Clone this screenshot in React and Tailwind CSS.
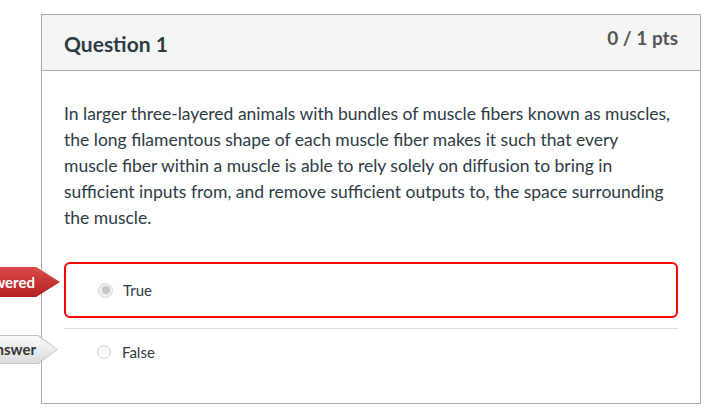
import React from 'react';

const font = { fontFamily: 'Lato, "Open Sans", sans-serif' };

const Tag = ({ children, variant }) => {
  if (variant === 'red') {
    return (
      <div className="absolute right-full mr-[4px] top-[5px] h-[30px] w-[140px] [clip-path:polygon(0_0,83%_0,100%_50%,83%_100%,0_100%)] bg-gradient-to-b from-[#dc4a4a] to-[#b11f1f] flex items-center justify-end pr-[25px]">
        <span className="text-white font-bold text-[15px] whitespace-nowrap">{children}</span>
      </div>
    );
  }
  return (
    <div className="absolute right-full mr-[6px] top-[6px] h-[29px] w-[140px] [clip-path:polygon(0_0,86%_0,100%_50%,86%_100%,0_100%)] bg-[#c4c4c4]">
      <div className="absolute inset-[1px] [clip-path:polygon(0_0,86%_0,100%_50%,86%_100%,0_100%)] bg-gradient-to-b from-[#fafafa] to-[#dcdcdc] flex items-center justify-end pr-[21px]">
        <span className="text-[#333] font-bold text-[15px] whitespace-nowrap">{children}</span>
      </div>
    </div>
  );
};

export default function App() {
  return (
    <div className="min-h-[414px] bg-white pt-[14px]" style={font}>
      <div className="ml-[41px] w-[660px] border border-[#a9a9a9]">
        <div className="h-[56px] bg-[#f5f5f5] border-b border-[#a9a9a9] flex justify-between items-start px-[22px]">
          <h2 className="pt-[16px] text-[21px] leading-[26px] font-bold text-[#2d3b45]">Question 1</h2>
          <div className="pt-[11px] text-[19px] leading-[24px] font-bold text-[#555]">0 / 1 pts</div>
        </div>
        <div className="px-[22px] pt-[30px] pb-[28px]">
          <p className="w-[608px] text-[17.5px] leading-[26px] text-[#2d3b45]">
            In larger three-layered animals with bundles of muscle fibers known as muscles, the long filamentous shape of each muscle fiber makes it such that every muscle fiber within a muscle is able to rely solely on diffusion to bring in sufficient inputs from, and remove sufficient outputs to, the space surrounding the muscle.
          </p>
          <div className="mt-[31px]">
            <div className="relative">
              <Tag variant="red">You Answered</Tag>
              <div className="h-[56px] border-2 border-[#ff0000] rounded-[6px] flex items-center pl-[32px]">
                <span className="w-[15px] h-[15px] rounded-full border border-[#d6d6d6] bg-[#f0f0f0] flex items-center justify-center">
                  <span className="w-[8px] h-[8px] rounded-full bg-[#c6c6c6]" />
                </span>
                <span className="ml-[10px] text-[15px] text-[#2d3b45]">True</span>
              </div>
            </div>
            <div className="mt-[10px] border-t border-[#dedede]" />
            <div className="relative">
              <Tag variant="gray">Correct Answer</Tag>
              <div className="h-[46px] flex items-center pl-[33px]">
                <span className="w-[14px] h-[14px] rounded-full border border-[#cfcfcf] bg-gradient-to-b from-[#f4f4f4] to-white" />
                <span className="ml-[11px] text-[15px] text-[#2d3b45]">False</span>
              </div>
            </div>
          </div>
        </div>
      </div>
    </div>
  );
}
